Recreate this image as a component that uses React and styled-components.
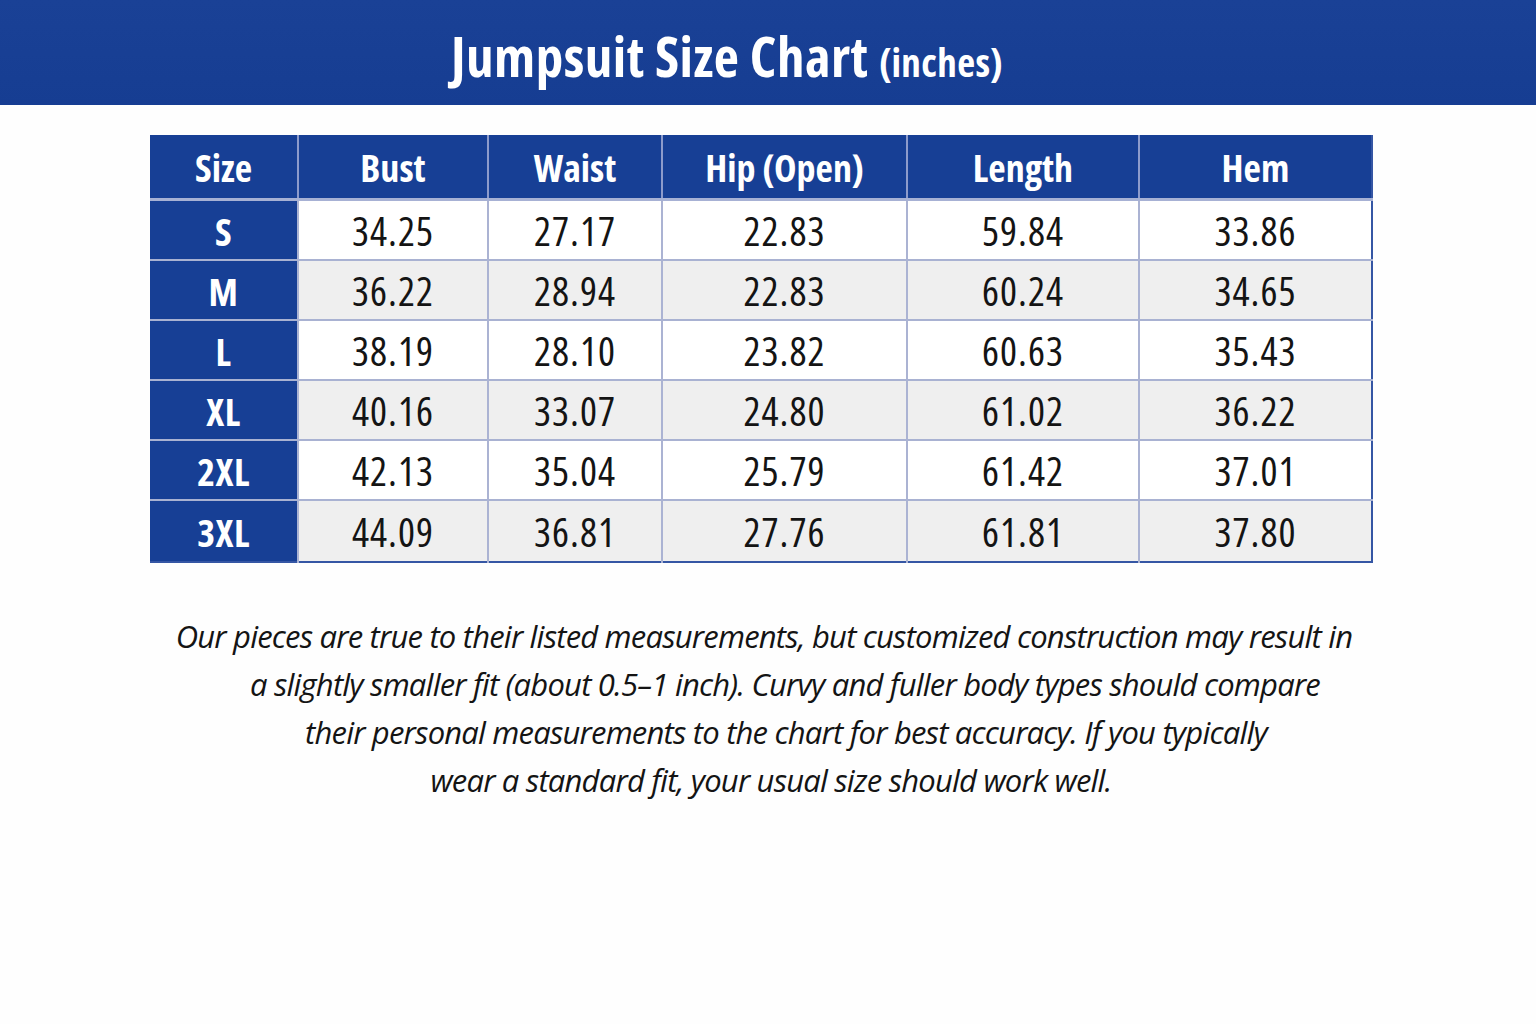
import styled, { createGlobalStyle } from "styled-components";

const GlobalStyle = createGlobalStyle`
    html, body {
        margin: 0;
        padding: 0;
        background: #fefefe;
    }
    body {
        font-family: "Open Sans", "Noto Sans", sans-serif;
    }
`;

const sizes = [
    { size: "S", values: ["34.25", "27.17", "22.83", "59.84", "33.86"] },
    { size: "M", values: ["36.22", "28.94", "22.83", "60.24", "34.65"] },
    { size: "L", values: ["38.19", "28.10", "23.82", "60.63", "35.43"] },
    { size: "XL", values: ["40.16", "33.07", "24.80", "61.02", "36.22"] },
    { size: "2XL", values: ["42.13", "35.04", "25.79", "61.42", "37.01"] },
    { size: "3XL", values: ["44.09", "36.81", "27.76", "61.81", "37.80"] },
];

const columns = [
    { title: "Size", width: 148 },
    { title: "Bust", width: 190 },
    { title: "Waist", width: 174 },
    { title: "Hip (Open)", width: 245 },
    { title: "Length", width: 232 },
    { title: "Hem", width: 233 },
];

// the lines of the note are not centred on one axis in the picture
const noteLines = [
    { text: "Our pieces are true to their listed measurements, but customized construction may result in", shift: -4 },
    { text: "a slightly smaller fit (about 0.5–1 inch). Curvy and fuller body types should compare", shift: 17 },
    { text: "their personal measurements to the chart for best accuracy. If you typically", shift: 18 },
    { text: "wear a standard fit, your usual size should work well.", shift: 3 },
];

export default function App() {
    return (
        <Page>
            <GlobalStyle />
            <Banner>
                <Title>
                    Jumpsuit Size Chart <Unit>(inches)</Unit>
                </Title>
            </Banner>

            <ChartTable>
                <colgroup>
                    {columns.map((col) => (
                        <col key={col.title} style={{ width: col.width }} />
                    ))}
                </colgroup>
                <thead>
                    <tr>
                        {columns.map((col) => (
                            <HeadCell key={col.title}>{col.title}</HeadCell>
                        ))}
                    </tr>
                </thead>
                <tbody>
                    {sizes.map((row, i) => (
                        <BodyRow key={row.size} $striped={i % 2 === 1}>
                            <SizeCell>{row.size}</SizeCell>
                            {row.values.map((v, j) => (
                                <ValueCell key={j}>{v}</ValueCell>
                            ))}
                        </BodyRow>
                    ))}
                </tbody>
            </ChartTable>

            <Note>
                {noteLines.map((line) => (
                    <NoteLine key={line.text} $shift={line.shift}>
                        {line.text}
                    </NoteLine>
                ))}
            </Note>
        </Page>
    );
}

const Page = styled.main`
    width: 1536px;
    min-height: 1024px;
    background: #fefefe;
    display: flex;
    flex-direction: column;
`;

const Banner = styled.header`
    height: 105px;
    background: linear-gradient(180deg, #1a4196 0%, #163d92 100%);
    display: flex;
    align-items: center;
    justify-content: center;
    padding-right: 82px;
`;

const Title = styled.h1`
    margin: 5px 0 0;
    font-family: "Open Sans", sans-serif;
    font-stretch: 75%;
    font-weight: 700;
    font-size: 55px;
    letter-spacing: 0.5px;
    color: #ffffff;
`;

const Unit = styled.span`
    font-size: 39px;
    letter-spacing: 0.4px;
`;

const ChartTable = styled.table`
    margin: 30px 0 0 150px;
    width: 1222px;
    table-layout: fixed;
    border-collapse: collapse;
    border-right: 2px solid #3556a4;
    border-bottom: 2px solid #3556a4;
    font-family: "Open Sans", sans-serif;
    font-stretch: 75%;
`;

const HeadCell = styled.th`
    height: 63px;
    padding: 0;
    background: #173f95;
    color: #ffffff;
    font-size: 38px;
    font-weight: 700;
    text-align: center;
    border-left: 2px solid #8d9bcb;
    border-bottom: 3px solid #a7b1d4;

    &:first-child {
        border-left: none;
    }
`;

const BodyRow = styled.tr`
    height: 60px;
    background: ${(p) => (p.$striped ? "#efefef" : "#ffffff")};
    border-top: 2px solid #a9b2d2;

    &:first-child {
        border-top: none;
    }
    &:last-child {
        height: 62px;
    }
`;

const SizeCell = styled.td`
    background: #173f95;
    color: #ffffff;
    font-size: 38px;
    font-weight: 700;
    letter-spacing: 0.5px;
    text-align: center;
    padding-top: 2px;
`;

const ValueCell = styled.td`
    color: #141414;
    font-size: 40px;
    font-weight: 400;
    letter-spacing: 1px;
    text-align: center;
    padding-top: 2px;
    border-left: 2px solid #abb3d3;
`;

const Note = styled.section`
    margin: 49px 0 0;
    display: flex;
    flex-direction: column;
    align-items: center;
    font-family: "Open Sans", sans-serif;
    font-stretch: 95%;
    font-style: italic;
    font-size: 31px;
    line-height: 48px;
    letter-spacing: -0.8px;
    color: #141414;
`;

const NoteLine = styled.span`
    display: block;
    white-space: nowrap;
    transform: translateX(${(p) => p.$shift}px);
`;
